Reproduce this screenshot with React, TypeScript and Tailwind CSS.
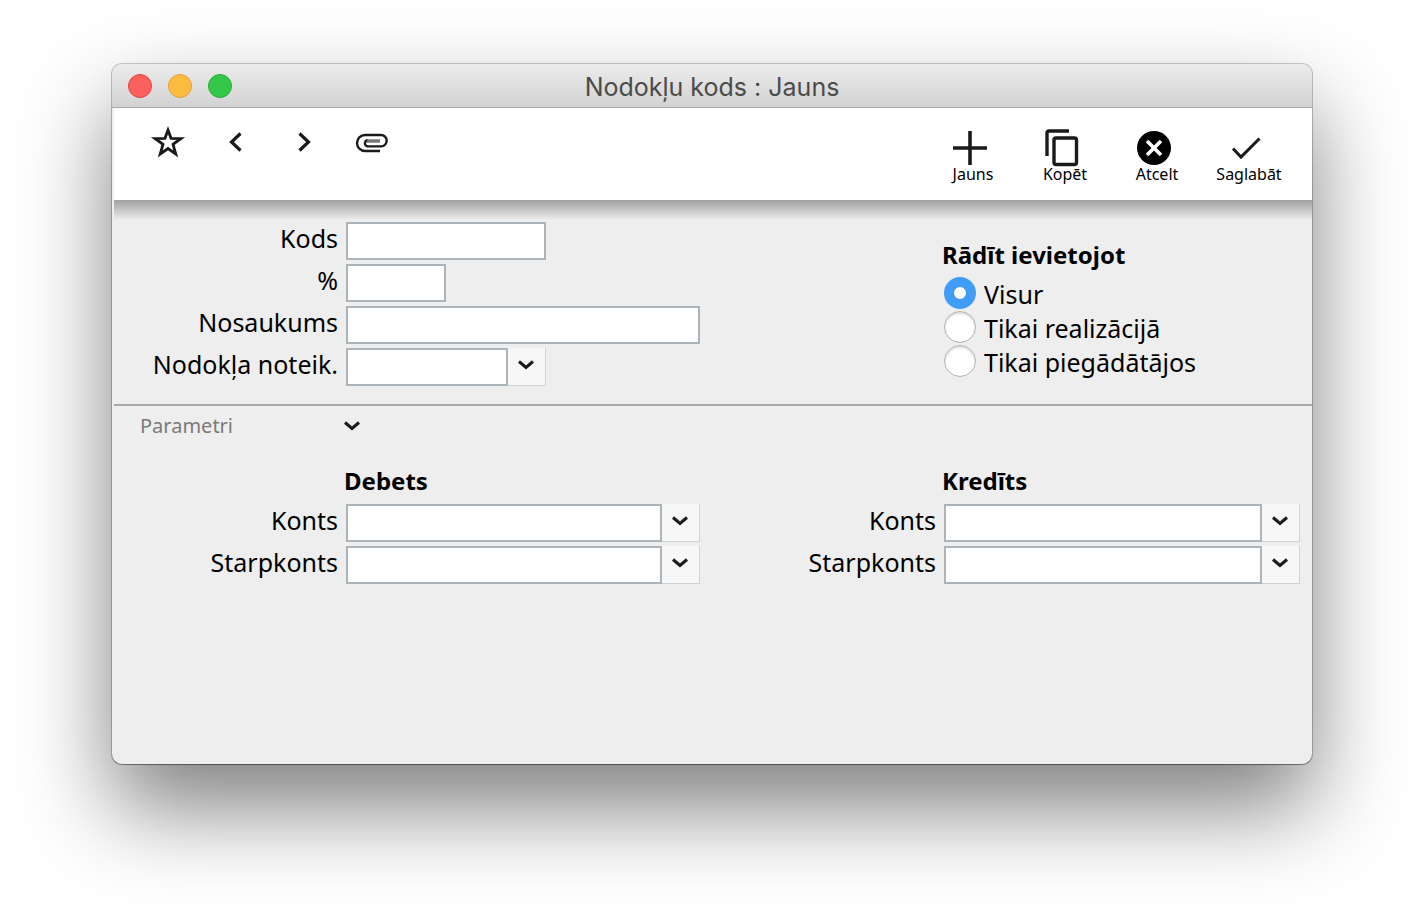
import { useId, type ReactNode } from "react";

function Chevron() {
  return (
    <svg viewBox="0 0 16 10" className="h-2.5 w-4" fill="none" stroke="#1a1a1a" strokeWidth="3" aria-hidden="true">
      <path d="M1 1.5 L8 7.5 L15 1.5" />
    </svg>
  );
}

function Row({ label, id, children }: { label: string; id: string; children: ReactNode }) {
  return (
    <div className="flex h-[38px] gap-2">
      <label htmlFor={id} className="w-56 shrink-0 text-right leading-8">{label}</label>
      {children}
    </div>
  );
}

const box = "h-full min-w-0 border-2 border-[#abb4b8] bg-white px-2 outline-none";

function Field({ label, width }: { label: string; width: string }) {
  const id = useId();
  return (
    <Row label={label} id={id}>
      <input id={id} type="text" className={`${box} ${width}`} />
    </Row>
  );
}

function LookupField({ label, width }: { label: string; width: string }) {
  const id = useId();
  return (
    <Row label={label} id={id}>
      <div className={`flex min-w-0 ${width}`}>
        <input id={id} type="text" className={`${box} flex-1`} />
        <button type="button" aria-label={label} className="flex w-[38px] shrink-0 items-center justify-center border-r border-b border-[#cdd3d4] bg-[#f7f7f7] pr-px pb-1">
          <Chevron />
        </button>
      </div>
    </Row>
  );
}

function IconButton({ label, children }: { label: string; children: ReactNode }) {
  return (
    <button type="button" aria-label={label} className="flex size-9 items-center justify-center">
      {children}
    </button>
  );
}

function ActionButton({ label, children }: { label: string; children: ReactNode }) {
  return (
    <button type="button" className="flex w-[92px] flex-col items-center text-base leading-3">
      <span className="flex h-10 items-center">{children}</span>
      <span className="pl-1.5">{label}</span>
    </button>
  );
}

function Radio({ label, checked }: { label: string; checked?: boolean }) {
  return (
    <label className="flex h-[34px] items-start gap-2">
      <input
        type="radio"
        name="scope"
        defaultChecked={checked}
        className="size-8 shrink-0 appearance-none rounded-full border border-[#b4b4b4] bg-white shadow-[inset_0_2px_2px_#dddddd] checked:border-10 checked:border-[#419cf8] checked:shadow-none"
      />
      <span className="leading-[34px]">{label}</span>
    </label>
  );
}

export default function App() {
  const scopeId = useId();
  return (
    <div className="min-h-screen overflow-hidden bg-white px-28 pt-16 pb-40 font-['Noto_Sans','Open_Sans',sans-serif] text-[25px] text-black">
      <main className="overflow-hidden rounded-[10px] bg-[#eeeeee] pb-[180px] shadow-[0_0_0_1px_rgba(0,0,0,0.2),0_1px_1px_rgba(0,0,0,0.3),0_44px_90px_rgba(0,0,0,0.5)]">
        <header className="grid h-11 grid-cols-[1fr_auto_1fr] items-center border-b border-[#a8a8a8] bg-linear-to-b from-[#ececec] to-[#d2d2d2] px-4">
          <div className="flex gap-4">
            <button type="button" aria-label="Aizvērt" className="size-6 rounded-full border border-[#e0443e] bg-[#fc605c]" />
            <button type="button" aria-label="Samazināt" className="size-6 rounded-full border border-[#dea236] bg-[#fdbc40]" />
            <button type="button" aria-label="Palielināt" className="size-6 rounded-full border border-[#27aa35] bg-[#34c84a]" />
          </div>
          <h1 className="pt-0.5 font-['Inter',sans-serif] text-[25px] leading-8 text-[#4b4b4b] [font-feature-settings:'calt'_0]">Nodokļu kods : Jauns</h1>
        </header>

        <div className="pl-0.5">
          <nav className="flex h-[92px] items-start justify-between bg-white pr-5 pl-9">
            <div className="flex gap-8 pt-4">
              <IconButton label="Izlase">
                <svg viewBox="0 0 36 36" className="size-9" fill="none" stroke="#1a1a1a" strokeWidth="2.8" aria-hidden="true">
                  <path d="M18 6 L21 14.3 L31 14.5 L23 20.300 L25.800 30 L18 24.5 L10.200 30 L13 20.300 L5 14.5 L15 14.300 Z" />
                </svg>
              </IconButton>
              <IconButton label="Iepriekšējais">
                <svg viewBox="0 0 36 36" className="size-9" fill="none" stroke="#1a1a1a" strokeWidth="3.2" aria-hidden="true">
                  <path d="M22.5 9.5 L13.5 18 L22.5 26.5" />
                </svg>
              </IconButton>
              <IconButton label="Nākamais">
                <svg viewBox="0 0 36 36" className="size-9" fill="none" stroke="#1a1a1a" strokeWidth="3.2" aria-hidden="true">
                  <path d="M13.500 9.5 L22.500 18 L13.500 26.5" />
                </svg>
              </IconButton>
              <IconButton label="Pielikumi">
                <svg viewBox="0 0 36 36" className="size-9" fill="none" stroke="#1a1a1a" strokeWidth="2.4" aria-hidden="true">
                  <path d="M26 27 H11 A8 8 0 0 1 11 11 H27 A5.7 5.7 0 0 1 27 22.4 H14 A3.1 3.1 0 0 1 14 16.2" />
                  <path d="M13 17 H26" stroke="#777777" strokeWidth="3.4" />
                </svg>
              </IconButton>
            </div>
            <div className="flex pt-5">
              <ActionButton label="Jauns">
                <svg viewBox="0 0 36 36" className="size-9" stroke="#1a1a1a" strokeWidth="3.6" aria-hidden="true">
                  <path d="M18 1 V35 M1 18 H35" />
                </svg>
              </ActionButton>
              <ActionButton label="Kopēt">
                <svg viewBox="0 0 36 40" className="h-10 w-9" fill="none" stroke="#1a1a1a" strokeWidth="3.4" aria-hidden="true">
                  <path d="M3 28 V5 Q3 3 5 3 H25" />
                  <rect x="10" y="10" width="22.500" height="26.500" rx="2" />
                </svg>
              </ActionButton>
              <ActionButton label="Atcelt">
                <svg viewBox="0 0 36 36" className="size-9" aria-hidden="true">
                  <circle cx="18" cy="18" r="17" fill="#000" />
                  <path d="M11 11 L25 25 M25 11 L11 25" stroke="#fff" strokeWidth="3.6" />
                </svg>
              </ActionButton>
              <ActionButton label="Saglabāt">
                <svg viewBox="0 0 36 36" className="size-9" fill="none" stroke="#1a1a1a" strokeWidth="3" aria-hidden="true">
                  <path d="M5 18.500 L13 27 L31.500 8.500" />
                </svg>
              </ActionButton>
            </div>
          </nav>
          <div className="h-5 bg-linear-to-b from-[#a0a0a0] to-[#eeeeee]" />

          <section className="grid grid-cols-2 border-b-2 border-[#a8a8a8] pt-0.5 pr-0.5 pb-[18px]">
            <div className="flex flex-col gap-1">
              <Field label="Kods" width="w-[200px]" />
              <Field label="%" width="w-[100px]" />
              <Field label="Nosaukums" width="w-[354px]" />
              <LookupField label="Nodokļa noteik." width="w-[200px]" />
            </div>
            <div role="radiogroup" aria-labelledby={scopeId} className="pt-4">
              <h2 id={scopeId} className="h-[39px] pl-[230px] text-2xl leading-[34px] font-bold">Rādīt ievietojot</h2>
              <div className="pl-[232px]">
                <Radio label="Visur" checked />
                <Radio label="Tikai realizācijā" />
                <Radio label="Tikai piegādātājos" />
              </div>
            </div>
          </section>

          <button type="button" className="ml-[26px] flex h-10 w-[220px] items-center justify-between text-xl text-[#7a7a7a]">
            Parametri
            <Chevron />
          </button>

          <section className="grid grid-cols-2 pt-4 pr-0.5">
            <div className="flex flex-col gap-1 pr-3">
              <h2 className="h-[38px] pl-[230px] text-2xl leading-[38px] font-bold">Debets</h2>
              <LookupField label="Konts" width="flex-1" />
              <LookupField label="Starpkonts" width="flex-1" />
            </div>
            <div className="flex flex-col gap-1 pr-2.5">
              <h2 className="h-[38px] pl-[230px] text-2xl leading-[38px] font-bold">Kredīts</h2>
              <LookupField label="Konts" width="flex-1" />
              <LookupField label="Starpkonts" width="flex-1" />
            </div>
          </section>
        </div>
      </main>
    </div>
  );
}
